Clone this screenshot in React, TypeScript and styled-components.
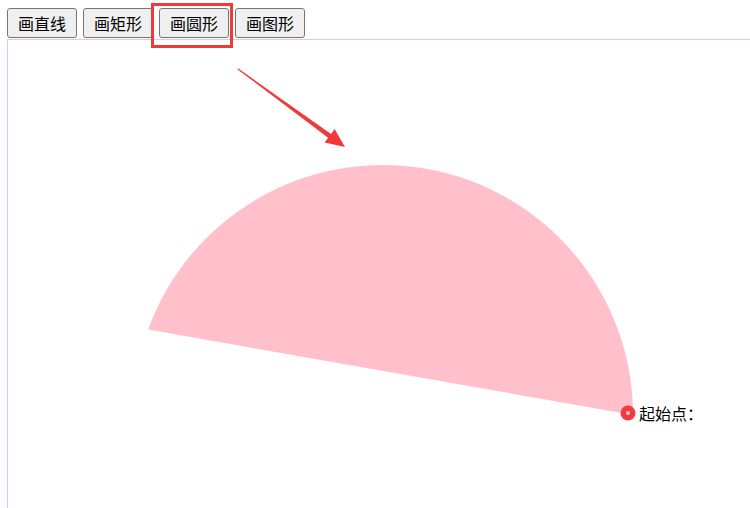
import React from 'react';
import styled, { createGlobalStyle } from 'styled-components';

const GlobalStyle = createGlobalStyle`
  html, body {
    margin: 0;
    background: #fff;
    overflow: hidden;
  }
`;

const Page = styled.div`
  width: 750px;
  height: 508px;
  padding: 8px 0 0 7px;
  box-sizing: border-box;
  overflow: hidden;
  font-family: "Noto Sans CJK SC", "Liberation Sans", sans-serif;
`;

const Toolbar = styled.div`
  display: flex;
  gap: 6px;
  height: 31px;
`;

const ToolButton = styled.button<{ $marked?: boolean }>`
  position: relative;
  height: 30px;
  padding: 0 10px;
  border: 1px solid #767676;
  border-radius: 3px;
  background: #efefef;
  color: #000;
  font-family: "Noto Sans CJK SC", sans-serif;
  font-size: 16px;
  line-height: 28px;
  cursor: pointer;

  &::after {
    content: '';
    display: ${p => (p.$marked ? 'block' : 'none')};
    position: absolute;
    top: -6px;
    left: -9px;
    right: -5px;
    bottom: -11px;
    border: 3px solid #f03a3a;
    pointer-events: none;
  }
`;

const Board = styled.div`
  width: 800px;
  height: 500px;
  border: 1px solid pink;
  box-sizing: content-box;
`;

const Label = styled.text`
  font-family: "Noto Sans CJK SC", sans-serif;
  font-size: 16px;
  fill: #000;
`;

const tools = ['画直线', '画矩形', '画圆形', '画图形'];

// 圆心 (375, 375)，半径 250，从 0 逆时针画到 200°
const cx = 375;
const cy = 375;
const r = 250;
const end = (200 * Math.PI) / 180;
const ex = cx + r * Math.cos(end);
const ey = cy + r * Math.sin(end);
const segment = `M ${cx + r} ${cy} A ${r} ${r} 0 0 0 ${ex} ${ey} Z`;

const App = () => {
  return (
    <Page>
      <GlobalStyle />
      <Toolbar>
        {tools.map((t, i) => (
          <ToolButton key={t} $marked={i === 2}>
            {t}
          </ToolButton>
        ))}
      </Toolbar>
      <Board>
        <svg width="800" height="500" viewBox="0 0 800 500">
          <path d={segment} fill="pink" />
          <circle cx="620" cy="373" r="7.5" fill="#f53a3f" />
          <circle cx="620" cy="373" r="2" fill="#ffd0d4" />
          <Label x="631" y="380">起始点：</Label>
          <polygon
            points="230.3,28.6 323.1,94 326.6,89 337,107 316.6,102.5 320.1,97.8 229.7,29.4"
            fill="#f03a3a"
          />
        </svg>
      </Board>
    </Page>
  );
};

export default App;
